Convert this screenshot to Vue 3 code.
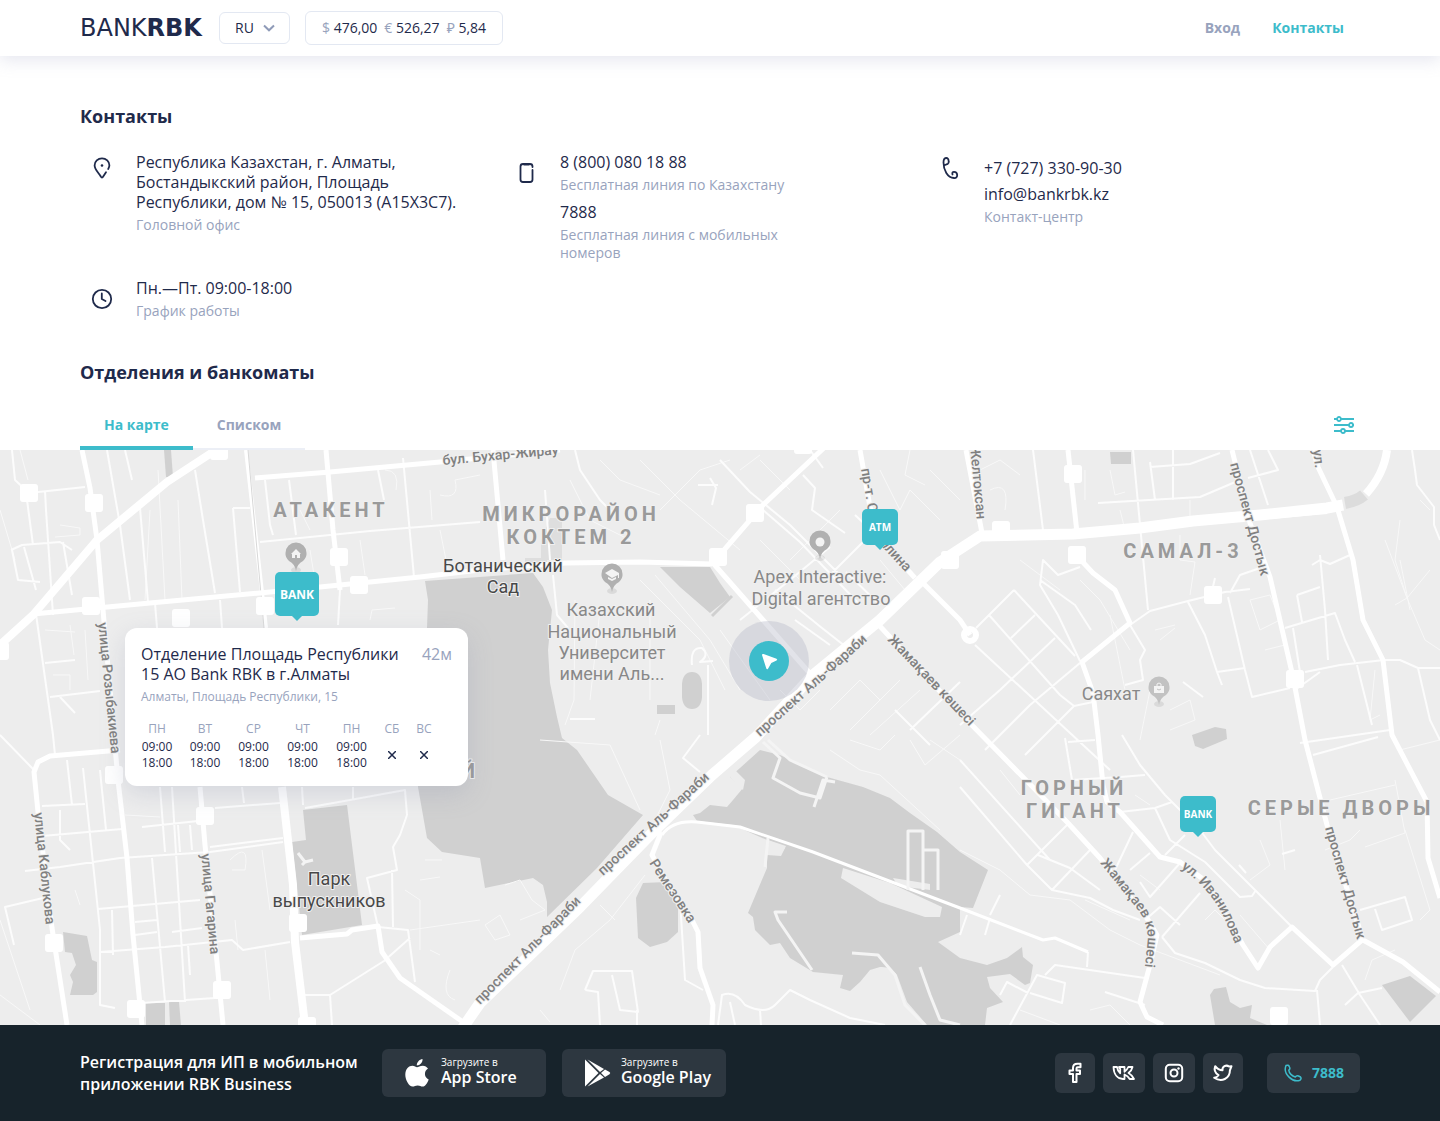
<script setup>
import { ref } from 'vue'

const language = ref('RU')
const activeTab = ref('map')

const rates = [
  { sign: '$', value: '476,00' },
  { sign: '€', value: '526,27' },
  { sign: '₽', value: '5,84' },
]

const tabs = [
  { id: 'map', label: 'На карте' },
  { id: 'list', label: 'Списком' },
]

const schedule = [
  { day: 'ПН', open: '09:00', close: '18:00' },
  { day: 'ВТ', open: '09:00', close: '18:00' },
  { day: 'СР', open: '09:00', close: '18:00' },
  { day: 'ЧТ', open: '09:00', close: '18:00' },
  { day: 'ПН', open: '09:00', close: '18:00' },
  { day: 'СБ' },
  { day: 'ВС' },
]

// Map drawing units: 1440 x 575
const MAP_W = 1440
const MAP_H = 575
const place = (x, y) => ({ left: `${(x / MAP_W) * 100}%`, top: `${(y / MAP_H) * 100}%` })

const markers = [
  { label: 'BANK', x: 297, y: 171, large: true },
  { label: 'ATM', x: 880, y: 99 },
  { label: 'BANK', x: 1198, y: 386 },
]

const stops = [
  [29, 43], [94, 53], [219, 1], [339, 107], [359, 135], [265, 156], [181, 168], [91, 156], [0, 201],
  [114, 325], [205, 366], [298, 473], [54, 493], [222, 540], [136, 559], [307, 576],
  [755, 63], [718, 107], [950, 110], [803, -5],
  [1073, 24], [1001, 80], [1077, 105], [1213, 145], [1295, 229], [1279, 566],
]

const parks = [
  'M425 131L533 123L543 137L552 160L548 200L550 233L557 267L562 288L577 300L608 345L643 365L597 418L547 467L547 452L543 435L533 428L485 438L480 408L442 402L427 388L418 337L416 240L427 178L428 150Z',
  'M303 360L347 355L362 475L302 485L292 392L306 390Z',
  'M63 482L87 486L92 510L97 512V542L93 545H70L73 532L70 525L76 515L72 503L65 502Z',
  'M146 553H165V575H146ZM169 552H179L181 575H170Z',
  'M164 0H171L173 27H166Z',
  'M660 117H710L720 133L730 147L710 163L680 137Z',
  'M682 234Q683 222 692 222Q701 222 702 234V247Q701 259 692 259Q683 259 682 247Z',
  'M657 255H675V264H657Z',
  'M760 300L780 305L827 327L863 337L890 348L910 363L937 382L960 402L988 420L973 458L960 457V482L938 492L960 508L987 515L1007 508L1022 497L1023 507L1033 515L1030 533L1025 535L1010 524L987 527L990 538L1003 552L987 558L985 575H927L907 552L897 525Q890 516 880 517L870 520L860 532L850 541L840 538L843 525L813 522L790 508L780 493L770 495L755 480L753 467L748 463L767 418V405L780 405L785 398L733 375L697 371L693 365L700 363L710 355L727 357L733 350L743 338L730 327Z',
  'M643 433L667 432L678 448V482L667 492L650 497L638 488L636 448Z',
  'M1192 285L1215 277L1226 279L1227 289L1203 299L1195 296Z',
  'M1382 535L1410 526L1436 546L1410 572Z',
  'M1210 545L1214 539L1226 537L1230 552L1240 558L1252 555L1250 568L1267 575H1215Z',
  'M1110 2H1131V14H1111Z',
]

const clearings = 'M843 418L890 433L942 457L940 467L925 467L880 452L841 428ZM893 428L930 434V440L898 436ZM768 390L786 396L781 406L767 405ZM730 327L733 318L745 330L743 340Z'

const arteries = {
  widest: [
    'M462 579L480 553L580 457L657 378L712 325L756 287L813 225L880 170L940 112L980 86L1073 84L1140 78L1193 71L1260 65L1327 58L1343 55',
  ],
  wide: [
    'M1190 72L1327 60M1366 44Q1384 24 1387 0',
    'M0 195L33 165L97 90L167 32L216 0',
    'M282 337L293 435L295 492L305 575',
  ],
  normal: [
    'M82 0L90 38L97 90L103 160L118 330L127 408L133 485L142 575',
    'M33 164L150 153L260 143L420 127L480 120L565 113L640 112L712 114',
    'M255 28L330 22L440 12L560 0',
    'M326 0L333 80L340 140',
    'M827 -5L763 55L718 107M713 113L763 170L813 227',
    'M860 0L870 57L885 95L915 128M923 133L960 170L970 185',
    'M1068 0L1077 83',
    'M877 173L960 263L1067 372L1100 408L1147 468L1157 485L1150 515L1140 552L1147 567L1163 575',
    'M1078 107L1093 123L1115 140L1130 173L1082 212L1093 243L1098 285L1103 335L1107 352L1120 362L1160 407L1180 412L1207 432L1243 495L1258 518L1270 497L1292 477L1333 515L1362 490',
    'M1232 0L1250 73L1270 127L1293 227L1305 290L1327 375L1363 490L1403 512L1440 542',
    'M1313 0L1318 17L1337 57L1353 110L1363 170L1383 210L1392 285L1427 352L1428 408L1440 448',
    'M657 373L660 385L652 405L668 435L693 472L698 482L700 518L713 555L712 575',
    'M120 300L50 306L38 312L34 322L38 362L52 478L67 575',
    'M200 337L205 395L217 512L223 575',
    'M300 488L347 484L352 480L378 476L382 502L400 528L463 572',
    'M966 0L982 83M493 0L503 110',
  ],
}

const streets =
  'M12 0L15 30L29 43L85 37M45 41L46 60L53 165M27 50L33 95M107 0L120 75L130 150M125 0L132 30M140 58L148 152M195 20L203 70L215 143M233 58H250M233 58L240 142' +
  'M265 30L270 75L273 85M289 30L296 85M260 92L370 81L480 72M378 20L384 50M403 8L414 127M340 140L338 175M11 100L22 95L60 92L72 100M12 100L18 130L40 132M24 97L36 140M63 92L72 145' +
  'M36 164L53 285L55 305M45 213L75 210M50 247L100 241M155 153L157 178M220 150L222 178M60 247L75 263' +
  'M0 285L34 320M67 310L72 355M42 356L85 354M42 386L122 379M83 318L100 480L100 555L115 558M100 320L106 380M25 421L60 417L120 408L210 402L283 392M160 337L165 402M172 337L185 552' +
  'M142 377L198 371M178 375L180 402M190 375L192 400M215 358L280 353M305 358L350 350L405 340L407 365M210 397L283 388M98 459L200 450M152 408L165 552M100 502L165 497L232 490L243 500L290 492' +
  'M135 472L157 470M135 485L157 482M172 482L202 478M142 553L215 548M43 448L5 457L14 495M60 360L60 390L70 400M112 460L113 505M188 495L190 525M242 337L244 353M302 337L303 355M353 337V350' +
  'M407 365L400 385L393 397L397 420L367 428L378 477L408 480L415 532M305 545H330L384 511L410 488M330 545L332 575M392 420L393 477' +
  'M575 0L580 20L600 50L615 65M720 10L750 42L790 75L840 125M763 60L800 92L860 155M803 25L815 38L812 60L845 83M830 125L870 85M795 170L830 195M740 170L790 130L830 97M855 65L890 98M775 140L822 178L850 200' +
  'M698 35H718M710 28L716 38L712 55M553 125L557 165L568 178M570 269H595M708 215V285M910 280L960 232M895 260L930 295M846 122L880 155M810 0L823 18M545 40L550 110' +
  'M692 215Q690 197 702 198Q710 205 700 212L713 211' +
  'M1033 0L1043 80M1133 0L1148 160M1130 175L1150 161L1188 151L1225 142L1250 139M1150 17L1190 14L1220 3M1150 12L1155 50M1098 53L1200 47L1240 30M1173 0V50M1250 0L1268 55M1268 0L1278 20L1248 28' +
  'M1080 117L1058 125L1043 110L1040 135L1058 165L1080 211M1040 130L1075 155L1091 180M1014 140L976 178M1014 140L1075 206M989 165L1060 245L1074 256L1093 252M975 195L1110 320M1035 165L1011 188M1055 188L1000 240L960 275' +
  'M1080 213L1030 255L985 300M1074 256L1025 305M1130 175L1145 200L1140 210L1143 230L1125 235M1188 152L1205 185L1217 222L1245 218M1228 147L1245 220L1252 247L1290 238M1230 143L1240 125L1260 118M1217 222L1222 235' +
  'M1305 222L1340 215L1384 210L1400 210L1418 218H1440M1285 178L1335 163L1345 190L1355 212M1297 145L1320 137M1320 105L1325 160L1328 210M1297 145L1302 172M1312 115L1320 110L1330 114L1350 105M1295 240L1320 222M1293 178L1300 222' +
  'M1418 218L1430 270L1440 290M1412 0L1415 20L1417 35L1434 57V75L1440 90M1357 215L1372 275M1300 293L1390 280M1211 145L1215 128M1183 232L1203 247' +
  'M960 310L1050 410M960 337L1027 415L1052 440L1090 448L1113 460L1140 470M1027 415L1067 375M1052 440L1090 400M1065 288L1072 330L1120 327L1145 325M1068 292L1095 290M1122 285L1140 315L1165 345L1200 380L1215 400L1245 430L1255 440L1292 477' +
  'M1120 362L1155 358L1172 352M1155 358L1170 390L1205 412L1240 447L1252 446L1256 440M1165 405L1185 385M1115 420L1133 382M1130 420L1150 403M1140 432L1150 447L1180 413M1162 487L1200 443M1162 487L1175 503L1205 513L1240 530L1265 538L1315 541L1320 530L1333 517' +
  'M1317 540L1320 575M1342 515L1360 545L1380 575M1345 555L1358 543L1382 538M1313 305L1378 287M1360 460L1405 447L1412 470L1382 480L1375 459M990 465L1000 445M960 485L967 465M985 485L990 468M1045 525L1055 515L1145 528' +
  'M1010 575L1037 525L1065 533L1062 553L1030 543M1000 545L1007 532L1028 543M1105 542L1145 555M1088 502L1087 517M1038 405L1070 418L1100 440M1145 470L1160 457L1180 475M1282 404L1295 400M1239 415L1246 423' +
  'M700 285L683 308L700 322M585 540L593 521H632L638 562L620 560L612 525M585 540L598 542L600 575M637 560V575M680 450L685 530L703 540M718 575L722 545Q735 540 745 555Q765 565 775 555L790 540L810 550L850 568L885 575M730 552L735 575M760 560L761 575'

const southRoad = 'M662 385Q672 370 697 372L740 377L813 402L960 458L1043 490L1055 488L1088 502'

const parkPaths =
  'M768 290L790 310L827 327M763 292L780 308L773 328L800 343L820 348L827 327M814 357L823 330L835 332M768 388L765 417M908 440V381H923V440M923 400H938V440' +
  'M787 462H775L778 470L812 520M852 503L878 505L895 525L905 555L925 575M920 517L930 545L940 570L960 575M298 403L305 412L313 410M305 412L302 415'

const lanes =
  'M0 60L15 110M20 0L28 30M150 60L145 150M158 20L165 150M178 50L182 150M60 75L80 78V85L55 87M300 60L310 80M430 40L432 70M440 45Q460 50 455 30L480 25M385 20Q400 20 396 40M360 90L365 125M310 100L314 125M440 80L448 120' +
  'M370 170L372 160L395 158M45 180L75 182M70 175L74 205M85 180L88 230M53 225H70V240M75 440L80 455M125 365L160 367M230 410Q250 390 245 420H232M262 400L270 460M235 470L238 500M265 500L270 550M0 470L30 560M0 545L40 575' +
  'M425 410H442M420 430L440 427M405 440L420 450V500M430 500L440 505M450 520Q440 545 455 550M410 480L480 470M505 435L520 430L532 450L545 460L520 470M485 475L500 465L510 485L495 490ZM600 455L615 470M560 540L575 500L610 470L645 425M540 560L550 572' +
  'M570 30L590 70L630 90M600 10L620 30L660 45M640 10L680 50L740 100M660 60L700 20L730 10M740 20L760 5M760 90L800 130M790 40L760 10M880 20L900 60L910 40L940 70M910 0L905 25L925 35M930 20L960 50M790 110L840 60M880 110L905 140' +
  'M575 150L574 250L565 275M600 160L590 250M640 130L700 190L725 240M655 125L710 190L740 240M720 180L770 250M650 150V250M660 270L655 285M780 240L800 260L820 240M830 260L860 230L880 250M850 280L900 230M870 285L920 240M540 290L610 295L640 360M660 290L670 340L655 370' +
  'M980 20L1000 10L1020 25M990 40Q1010 30 1005 60M1085 20V50M1110 20L1115 45L1125 42M1120 60L1125 80M1190 50V70M1180 85V110L1195 112L1190 145M1020 110L1060 140M1080 130L1100 150L1130 200M1110 165L1125 240M1155 180L1175 175' +
  'M1160 190L1175 178M1400 70L1395 110L1407 148L1430 120M1385 90L1407 148L1395 155M1407 148L1425 190L1440 200M1420 50L1430 60M1250 150L1270 145L1280 170L1260 180ZM1265 200L1285 195M1375 220L1370 270L1380 265M1170 260L1190 250L1195 270L1170 280' +
  'M1400 110L1410 160M1140 290L1150 240M960 400L1000 420L1030 445L1070 450L1110 480L1140 495L1220 525M1000 320L1020 345M1085 450L1130 470M1135 345L1150 355M1260 390L1270 415L1250 430M1280 370L1285 420M1330 350L1395 335M1325 400L1350 390L1360 380M1400 300L1440 290M1365 397L1405 383L1395 330' +
  'M1405 380L1430 460L1420 470M1240 465L1270 500M1205 470L1215 460L1235 480M1365 530L1372 510L1395 500M1020 560L1060 575M1090 560L1110 555L1130 575M1140 425L1160 440M830 300L860 320L880 325L940 380M850 290L880 300L895 285M910 290L925 315L960 285M930 290L960 310'

const districts = [
  { text: 'АТАКЕНТ', x: 331, y: 67 },
  { text: 'МИКРОРАЙОН', x: 571, y: 71 },
  { text: 'КОКТЕМ 2', x: 571, y: 94 },
  { text: 'САМАЛ-3', x: 1183, y: 108 },
  { text: 'ГОРНЫЙ', x: 1074, y: 345 },
  { text: 'ГИГАНТ', x: 1075, y: 368 },
  { text: 'СЕРЫЕ ДВОРЫ', x: 1341, y: 365 },
  { text: 'Й', x: 470, y: 328 },
]

const places = [
  { text: 'Ботанический', x: 503, y: 122, dark: true },
  { text: 'Сад', x: 503, y: 143, dark: true },
  { text: 'Парк', x: 329, y: 435, dark: true },
  { text: 'выпускников', x: 329, y: 457, dark: true },
  { text: 'Казахский', x: 611, y: 166 },
  { text: 'Национальный', x: 612, y: 188 },
  { text: 'Университет', x: 612, y: 209 },
  { text: 'имени Аль...', x: 612, y: 230 },
  { text: 'Apex Interactive:', x: 820, y: 133 },
  { text: 'Digital агентство', x: 821, y: 155 },
  { text: 'Саяхат', x: 1111, y: 250 },
]

const roadNames = [
  { text: 'бул. Бухар-Жирау', path: 'M443 15L571 3' },
  { text: 'улица Розыбакиева', path: 'M98 173L113 320' },
  { text: 'улица Каблукова', path: 'M34 363L48 495' },
  { text: 'улица Гагарина', path: 'M201 404L212 520' },
  { text: 'Ремезовка', path: 'M649 413L699 489' },
  { text: 'Желтоксан', path: 'M970 -4L978 82' },
  { text: 'ул.', path: 'M1313 0L1317 33' },
  { text: 'проспект Аль-Фараби', path: 'M760 287L878 181' },
  { text: 'проспект Аль-Фараби', path: 'M603 426L718 321' },
  { text: 'проспект Аль-Фараби', path: 'M480 555L589 444' },
  { text: 'проспект Достык', path: 'M1230 14L1266 145' },
  { text: 'проспект Достык', path: 'M1325 378L1363 510' },
  { text: 'Жамақаев көшесі', path: 'M887 190L985 293' },
  { text: 'пр-т. Сейфуллина', path: 'M861 19L866 48Q870 80 884 99L925 143' },
  { text: 'Жамақаев көшесі', path: 'M1100 413L1138 460Q1150 476 1147 496L1142 545' },
  { text: 'ул. Иванилова', path: 'M1181 418Q1212 440 1226 472L1248 525' },
]

const poiPins = [
  { x: 296, y: 104, kind: 'home' },
  { x: 612, y: 125, kind: 'school' },
  { x: 820, y: 92, kind: 'dot' },
  { x: 1159, y: 238, kind: 'bag' },
]
</script>

<template>
  <div class="page">
    <header class="header">
      <a class="logo" href="#">BANK<b>RBK</b></a>
      <div class="language">
        <select v-model="language" aria-label="Язык">
          <option>RU</option>
          <option>KZ</option>
          <option>EN</option>
        </select>
        <svg class="chevron" width="12" height="8" viewBox="0 0 12 8" fill="none" stroke="#8f9bb8" stroke-width="2"><path d="M1 1.500L6 6.300L11 1.500" /></svg>
      </div>
      <div class="rates">
        <span v-for="rate in rates" :key="rate.sign"><i>{{ rate.sign }}</i> {{ rate.value }}</span>
      </div>
      <nav class="nav">
        <a href="#">Вход</a>
        <a href="#" class="current">Контакты</a>
      </nav>
    </header>

    <main>
      <section class="content">
        <h2>Контакты</h2>
        <div class="contacts">
          <div class="contact">
            <span class="contact-icon short">
              <svg width="24" height="24" viewBox="0 0 24 24" fill="none" stroke="#1f2a4b" stroke-width="1.800" stroke-linecap="round" stroke-linejoin="round">
                <path d="M18.200 13Q19.400 11 19.400 9.300A7.400 7 0 0 0 4.600 9.300C4.600 14 9 17 10.800 20.500Q12 22.500 13.200 20.500L16 16.200" /><circle cx="12" cy="9.500" r="1.300" fill="#1f2a4b" stroke="none" />
              </svg>
            </span>
            <div class="contact-text">
              <p>Республика Казахстан, г. Алматы, Бостандыкский район, Площадь Республики, дом № 15, 050013 (A15X3C7).</p>
              <small>Головной офис</small>
            </div>
          </div>
          <div class="contact">
            <span class="contact-icon">
              <svg width="24" height="24" viewBox="0 0 24 24" fill="none" stroke="#1f2a4b" stroke-width="1.800" stroke-linecap="round">
                <path d="M18.500 9V18.500Q18.500 21 16 21H9Q6.500 21 6.500 18.500V5.500Q6.500 3 9 3H16Q18.500 3 18.500 5.500V6M10 3.500H15" />
              </svg>
            </span>
            <div class="contact-text narrow">
              <p>8 (800) 080 18 88</p>
              <small>Бесплатная линия по Казахстану</small>
              <p class="next">7888</p>
              <small>Бесплатная линия с мобильных номеров</small>
            </div>
          </div>
          <div class="contact">
            <span class="contact-icon short">
              <svg width="24" height="24" viewBox="0 0 24 24" fill="none" stroke="#1f2a4b" stroke-width="1.800" stroke-linecap="round" stroke-linejoin="round">
                <path d="M7 9L9.800 7.800Q11 7 10.700 5.500Q10.500 1.800 8 2Q5.500 2.200 5.500 6.500C5.500 14 9.500 22 16 22Q19.200 22.300 19.200 19Q19 15.800 16 15.800Q13.800 15.800 14.500 18.500" />
              </svg>
            </span>
            <div class="contact-text center-line">
              <p>+7 (727) 330-90-30</p>
              <p>info@bankrbk.kz</p>
              <small>Контакт-центр</small>
            </div>
          </div>
          <div class="contact">
            <span class="contact-icon">
              <svg width="24" height="24" viewBox="0 0 24 24" fill="none" stroke="#1f2a4b" stroke-width="1.800" stroke-linecap="round" stroke-linejoin="round"><circle cx="12" cy="12" r="9.200" /><path d="M11.800 6.500V12L15.500 14" /></svg>
            </span>
            <div class="contact-text">
              <p>Пн.—Пт. 09:00-18:00</p>
              <small>График работы</small>
            </div>
          </div>
        </div>

        <h2 class="branches-title">Отделения и банкоматы</h2>
        <div class="toolbar">
          <div class="tabs" role="tablist">
            <button v-for="tab in tabs" :key="tab.id" type="button" role="tab" class="tab" :class="{ active: activeTab === tab.id }" :aria-selected="activeTab === tab.id" @click="activeTab = tab.id">{{ tab.label }}</button>
          </div>
          <button class="filter" type="button" aria-label="Фильтры">
            <svg width="20" height="18" viewBox="0 0 20 18" fill="#fff" stroke="#3dbccb" stroke-width="2"><path d="M0 3H20M0 9H20M0 15H20" /><circle cx="5" cy="3" r="2" stroke-width="1.800" /><circle cx="17" cy="9" r="2" stroke-width="1.800" /><circle cx="9" cy="15" r="2" stroke-width="1.800" /></svg>
          </button>
        </div>
      </section>

      <section class="map" aria-label="Карта отделений">
        <svg class="map-canvas" viewBox="0 0 1440 575" fill="none" stroke-linejoin="round">
          <rect width="1440" height="575" fill="#ededed" />
          <path d="M525 120V108H541V90L550 68H562V110H547V118Z" fill="#dedede" />
          <path v-for="shape in parks" :key="shape" :d="shape" fill="#d0d0d0" />
          <path :d="clearings" fill="#ededed" />
          <path :d="lanes" stroke="#f8f8f8" />
          <path d="M246 0L266 178" stroke="#fff" stroke-width="4" /><path d="M248 0L264 178" stroke="#d8d8d8" />
          <path d="M712 166L732 146" stroke="#d0d0d0" stroke-width="3" />
          <path :d="streets" stroke="#fcfcfc" stroke-width="2" />
          <path :d="southRoad" stroke="#fff" stroke-width="3" />
          <path :d="parkPaths" stroke="#f4f4f4" stroke-width="3" />
          <path v-for="road in arteries.normal" :key="road" :d="road" stroke="#fff" stroke-width="5" />
          <path v-for="road in arteries.wide" :key="road" :d="road" stroke="#fff" stroke-width="8" />
          <path v-for="road in arteries.widest" :key="road" :d="road" stroke="#fff" stroke-width="11" />
          <path d="M1345 53Q1357 51 1364 45" stroke="#dcdcdc" stroke-width="12" />
          <circle cx="970" cy="185" r="6" stroke="#fff" stroke-width="6" />
          <rect v-for="stop in stops" :key="stop.join()" :x="stop[0] - 9" :y="stop[1] - 9" width="18" height="18" rx="3" fill="#fff" />

          <g v-for="pin in poiPins" :key="pin.kind" :transform="`translate(${pin.x} ${pin.y})`">
            <ellipse cy="16" rx="5" ry="3" fill="#000" opacity=".08" />
            <path d="M0 17Q-1 10 -7 7Q-11 3 -10.500 -1A10.500 10.500 0 0 1 10.500 -1Q11 3 7 7Q1 10 0 17Z" :fill="pin.kind === 'bag' ? '#c2c2c2' : '#b0b0b0'" />
            <circle v-if="pin.kind === 'dot'" r="4.500" fill="#f4f4f4" />
            <path v-else-if="pin.kind === 'home'" d="M-5 0L0 -5L5 0H4V4H1V1H-1V4H-4V0Z" fill="#f4f4f4" />
            <path v-else-if="pin.kind === 'school'" d="M-7 -2L0 -6L7 -2V3H6V0L0 3ZM-4 2L0 4L4 2V4L0 6L-4 4Z" fill="#f4f4f4" />
            <g v-else><path d="M-5 -2H5V5H-5Z" fill="#f4f4f4" /><path d="M-2 -2V-4Q0 -6 2 -4V-2" stroke="#f4f4f4" /><path d="M-2 1Q0 3 2 1" stroke="#c2c2c2" /></g>
          </g>

          <g class="district"><text v-for="name in districts" :key="name.text" :x="name.x" :y="name.y">{{ name.text }}</text></g>
          <g class="place"><text v-for="name in places" :key="name.text" :x="name.x" :y="name.y" :class="{ dark: name.dark }">{{ name.text }}</text></g>
          <g class="road-name">
            <template v-for="(road, index) in roadNames" :key="index">
              <path :id="`road-${index}`" :d="road.path" fill="none" stroke="none" />
              <text><textPath :href="`#road-${index}`">{{ road.text }}</textPath></text>
            </template>
          </g>
        </svg>

        <button v-for="marker in markers" :key="marker.x" type="button" class="marker" :class="{ large: marker.large }" :style="place(marker.x, marker.y)">{{ marker.label }}</button>

        <div class="position" :style="place(769, 211)">
          <span><svg width="18" height="18" viewBox="0 0 18 18" fill="#fff"><path d="M2 3Q2 1.500 3.600 2L16.500 6.800Q18 7.700 16.500 8.500L11.300 11L8 16.800Q7 18 6.300 16.500Z" /></svg></span>
        </div>

        <article class="branch" :style="place(125, 178)">
          <div class="branch-head">
            <h3>Отделение Площадь Республики 15 АО Bank RBK в г.Алматы</h3>
            <span>42м</span>
          </div>
          <p>Алматы, Площадь Республики, 15</p>
          <table>
            <thead>
              <tr><th v-for="(item, index) in schedule" :key="index" scope="col">{{ item.day }}</th></tr>
            </thead>
            <tbody>
              <tr>
                <td v-for="(item, index) in schedule" :key="index">
                  <template v-if="item.open">{{ item.open }}<br />{{ item.close }}</template>
                  <svg v-else width="8" height="8" viewBox="0 0 8 8" stroke="#1f2a4b" stroke-width="1.500" role="img" aria-label="Закрыто"><path d="M0 0L8 8M8 0L0 8" /></svg>
                </td>
              </tr>
            </tbody>
          </table>
        </article>
      </section>
    </main>

    <footer class="footer">
      <p>Регистрация для ИП в мобильном приложении RBK Business</p>
      <a class="store" href="#">
        <svg width="24" height="28" viewBox="0 0 24 28" fill="#fff"><path d="M17.500 0C17.800 3.400 15 6.500 11.800 6.500C11.500 3.400 14.500 .300 17.500 0Z" /><path d="M12 8.300C13.300 8.300 15 6.700 17.800 6.700C20 6.800 21.800 7.800 23 9.500C18.500 12.300 19.200 18.500 23.700 20.500C22.500 23.700 20.300 27.500 17.700 27.600C15.700 27.600 15.100 26.400 12.700 26.400C10.300 26.400 9.500 27.600 7.600 27.600C4 27.600 .300 20.800 .300 15.700C.300 9.700 4 6.800 7.300 6.700C9.500 6.700 11 8.300 12 8.300Z" /></svg>
        <span><small>Загрузите в</small>App Store</span>
      </a>
      <a class="store play" href="#">
        <svg width="26" height="28" viewBox="0 0 26 28" fill="#fff"><path d="M0 .500L13.500 14L0 27.500Z" /><path d="M2.500 .500L19 10L15 13Z" /><path d="M2.500 27.500L19 18.500L15 15Z" /><path d="M20 10.500L24.500 13Q26 14 24.500 15.200L20 18L16 14Z" /></svg>
        <span><small>Загрузите в</small>Google Play</span>
      </a>
      <div class="social">
        <a href="#" aria-label="Facebook"><svg width="24" height="24" viewBox="0 0 24 24" fill="none" stroke="#fff" stroke-width="2" stroke-linejoin="round"><path d="M17.500 2.800H14.500Q10 2.800 10 7V9.500H6.500V13H10V21H13.500V13H17V9.500H13.500V7.500Q13.500 6.300 14.700 6.300H17.500Z" /></svg></a>
        <a href="#" aria-label="ВКонтакте" class="wide"><svg width="24" height="24" viewBox="0 0 24 24" fill="none" stroke="#fff" stroke-width="1.800" stroke-linejoin="round"><path d="M1.500 6H5C5.500 9 6.500 11 8.200 12.300V8L7 6H12.500V10.800C14.500 9.500 15.500 7.800 16.300 6H20.500C20 8.500 18.500 10.500 16.500 12C19 13.300 20.500 15.300 22 18H17.700C16.500 15.800 15 14.500 12.500 13.500V18H11C5.500 18 1.800 13.500 1.500 6Z" /></svg></a>
        <a href="#" aria-label="Instagram" class="wide"><svg width="24" height="24" viewBox="0 0 24 24" fill="none" stroke="#fff" stroke-width="2"><rect x="3.800" y="3.800" width="16.400" height="16.400" rx="4" /><circle cx="12" cy="12" r="3.500" /><circle cx="16.500" cy="7.500" r="1.200" fill="#fff" stroke="none" /></svg></a>
        <a href="#" aria-label="Twitter"><svg width="24" height="24" viewBox="0 0 24 24" fill="none" stroke="#fff" stroke-width="2" stroke-linejoin="round"><path d="M20.500 5.200L18 5.600A4 4 0 0 0 11.500 9.300C8.500 9.200 6 7.700 4.200 5.200C3 8.500 4 12 7.500 14.200C6.500 15.700 5 16.500 3.200 16.700C10.500 21.800 19 17.500 18.900 9.300Z" /></svg></a>
      </div>
      <a class="call" href="tel:7888">
        <svg width="18" height="18" viewBox="0 0 18 18" fill="none" stroke="#3dbccb" stroke-width="1.500" stroke-linejoin="round"><path d="M2 1.500Q4.500 .300 5.500 3Q6.500 5 4.800 6.200C5 9 8 12.300 11.300 13Q12.500 11.300 14.500 12L16.500 13Q17.800 14.500 16 16.200C9 19 -1.500 10 2 1.500Z" /></svg>
        <span>7888</span>
      </a>
    </footer>
  </div>
</template>

<style>
body {
  margin: 0;
}
</style>

<style scoped>
.page {
  background: #fff;
  color: #1f2a4b;
  font-family: "Open Sans", "Noto Sans", sans-serif;
  font-size: 14px;
}

.page * {
  box-sizing: border-box;
}

a {
  text-decoration: none;
}

button {
  border: 0;
  background: none;
  font-family: inherit;
  cursor: pointer;
}

h2,
h3,
p {
  margin: 0;
}

.header {
  display: flex;
  align-items: center;
  height: 56px;
  padding: 0 96px 0 80px;
  box-shadow: 0 4px 16px rgba(150, 155, 190, 0.25);
}

.logo {
  width: 123px;
  margin-right: 16px;
  color: #1f2a4b;
  font-family: "DejaVu Sans", sans-serif;
  font-size: 24px;
  line-height: 32px;
}

.language {
  position: relative;
  margin-right: 15px;
}

.language select {
  display: block;
  width: 71px;
  height: 32px;
  padding: 0 15px 2px;
  border: 1px solid #e3e8f2;
  border-radius: 6px;
  appearance: none;
  background: #fff;
  color: inherit;
  font: inherit;
}

.chevron {
  position: absolute;
  top: 12px;
  right: 15px;
  pointer-events: none;
}

.rates {
  display: flex;
  align-items: center;
  gap: 7px;
  height: 34px;
  padding: 0 16px 2px;
  border: 1px solid #e3e8f2;
  border-radius: 6px;
}

.rates i {
  color: #98a3bd;
  font-style: normal;
}

.nav {
  display: flex;
  gap: 32px;
  margin-left: auto;
  padding-bottom: 2px;
  font-weight: 700;
}

.nav a {
  color: #98a3bd;
}

.nav .current {
  color: #3dbccb;
}

.content {
  padding: 48px 80px 0;
}

h2 {
  font-size: 18px;
  line-height: 24px;
}

.contacts {
  display: grid;
  grid-template-columns: repeat(3, 1fr);
  row-gap: 16px;
  margin: 24px 8px 0 0;
}

.contact {
  display: flex;
  align-items: flex-start;
  gap: 12px;
}

.contact-icon {
  display: flex;
  align-items: center;
  justify-content: center;
  flex: none;
  width: 44px;
  height: 42px;
}

.contact-icon.short {
  height: 32px;
}

.contact-text {
  max-width: 336px;
  font-size: 16px;
  line-height: 20px;
}

.contact-text.narrow {
  max-width: 248px;
}

.contact-text small {
  display: block;
  margin-top: 4px;
  color: #98a3bd;
  font-size: 14px;
  line-height: 18px;
}

.contact-text .next {
  margin-top: 8px;
}

.center-line {
  padding-top: 6px;
}

.center-line p + p {
  margin-top: 6px;
}

.branches-title {
  margin-top: 40px;
}

.toolbar {
  display: flex;
  justify-content: space-between;
  margin-top: 16px;
}

.tabs {
  display: flex;
}

.tab {
  height: 50px;
  padding: 0 24px;
  border-bottom: 2px solid #eceff6;
  color: #98a3bd;
  font-size: 14px;
  font-weight: 700;
}

.tab.active {
  padding-top: 2px;
  border-bottom: 4px solid #3dbccb;
  color: #3dbccb;
}

.filter {
  display: flex;
  align-items: center;
  padding: 0 6px;
}

.map {
  position: relative;
}

.map-canvas {
  display: block;
  width: 100%;
  height: auto;
}

.map-canvas text {
  font-family: Roboto, sans-serif;
  paint-order: stroke;
  stroke: #f0f0f0;
  stroke-width: 2px;
}

.district {
  fill: #9a9a9a;
  font-size: 20px;
  font-weight: 700;
  letter-spacing: 4px;
  text-anchor: middle;
}

.place {
  fill: #888;
  font-size: 18px;
  text-anchor: middle;
}

.place .dark {
  fill: #484848;
}

.road-name {
  fill: #808080;
  font-size: 14px;
  font-weight: 500;
}

.marker {
  position: absolute;
  width: 36px;
  height: 36px;
  padding: 0;
  border-radius: 5px;
  background: #3dbccb;
  color: #fff;
  font-size: 10px;
  font-weight: 700;
  transform: translate(-50%, -40px);
}

.marker.large {
  width: 44px;
  height: 44px;
  font-size: 12px;
  transform: translate(-50%, -49px);
}

.marker::after {
  position: absolute;
  top: 100%;
  left: 50%;
  border: 5px solid transparent;
  border-top-color: #3dbccb;
  border-bottom: 0;
  content: "";
  transform: translateX(-50%);
}

.position {
  position: absolute;
  display: flex;
  align-items: center;
  justify-content: center;
  width: 80px;
  height: 80px;
  border-radius: 50%;
  background: rgba(182, 184, 200, 0.4);
  transform: translate(-50%, -50%);
}

.position span {
  display: flex;
  align-items: center;
  justify-content: center;
  width: 40px;
  height: 40px;
  border-radius: 50%;
  background: #3dbccb;
}

.branch {
  position: absolute;
  width: 343px;
  padding: 16px 16px 15px;
  border-radius: 12px;
  background: #fff;
  box-shadow: 0 8px 24px rgba(140, 148, 175, 0.25);
}

.branch-head {
  display: flex;
  justify-content: space-between;
  gap: 16px;
  font-size: 16px;
  line-height: 20px;
}

.branch h3 {
  font-size: 16px;
  font-weight: 400;
}

.branch-head span {
  color: #98a3bd;
}

.branch p {
  margin-top: 5px;
  color: #98a3bd;
  font-size: 12px;
  line-height: 16px;
}

.branch table {
  width: 307px;
  margin: 16px 0 0 -8px;
  border-collapse: collapse;
  font-size: 12px;
  line-height: 16px;
  table-layout: fixed;
  text-align: center;
}

.branch th {
  width: 49px;
  padding: 0 0 2px;
  color: #98a3bd;
  font-weight: 400;
}

.branch th:nth-child(-n + 2) {
  width: 48px;
}

.branch th:nth-child(n + 6) {
  width: 32px;
}

.branch td {
  padding: 0;
}

.branch td svg {
  display: block;
  margin: 0 auto;
}

.footer {
  display: flex;
  align-items: center;
  padding: 24px 80px;
  background: #17232b;
  color: #fff;
}

.footer p {
  width: 286px;
  margin-right: 16px;
  font-size: 16px;
  font-weight: 600;
  line-height: 22px;
}

.store {
  display: flex;
  align-items: center;
  gap: 12px;
  width: 164px;
  height: 48px;
  margin-right: 16px;
  padding-left: 23px;
  border-radius: 6px;
  background: #2d3740;
  color: #fff;
  font-size: 16px;
  font-weight: 600;
  line-height: 18px;
  white-space: nowrap;
}

.store.play {
  gap: 10px;
}

.store span {
  padding-bottom: 4px;
}

.store small {
  display: block;
  font-size: 10px;
  font-weight: 400;
  line-height: 12px;
}

.social {
  display: flex;
  gap: 8px;
  margin-left: auto;
}

.social a {
  display: flex;
  align-items: center;
  justify-content: center;
  width: 40px;
  height: 40px;
  border-radius: 6px;
  background: #2d3740;
}

.social .wide {
  width: 42px;
}

.call {
  display: flex;
  align-items: center;
  gap: 10px;
  height: 40px;
  margin-left: 24px;
  padding: 0 16px 0 17px;
  border-radius: 6px;
  background: #2d3740;
  color: #3dbccb;
  font-weight: 700;
}

.call span {
  padding-bottom: 2px;
}
</style>
